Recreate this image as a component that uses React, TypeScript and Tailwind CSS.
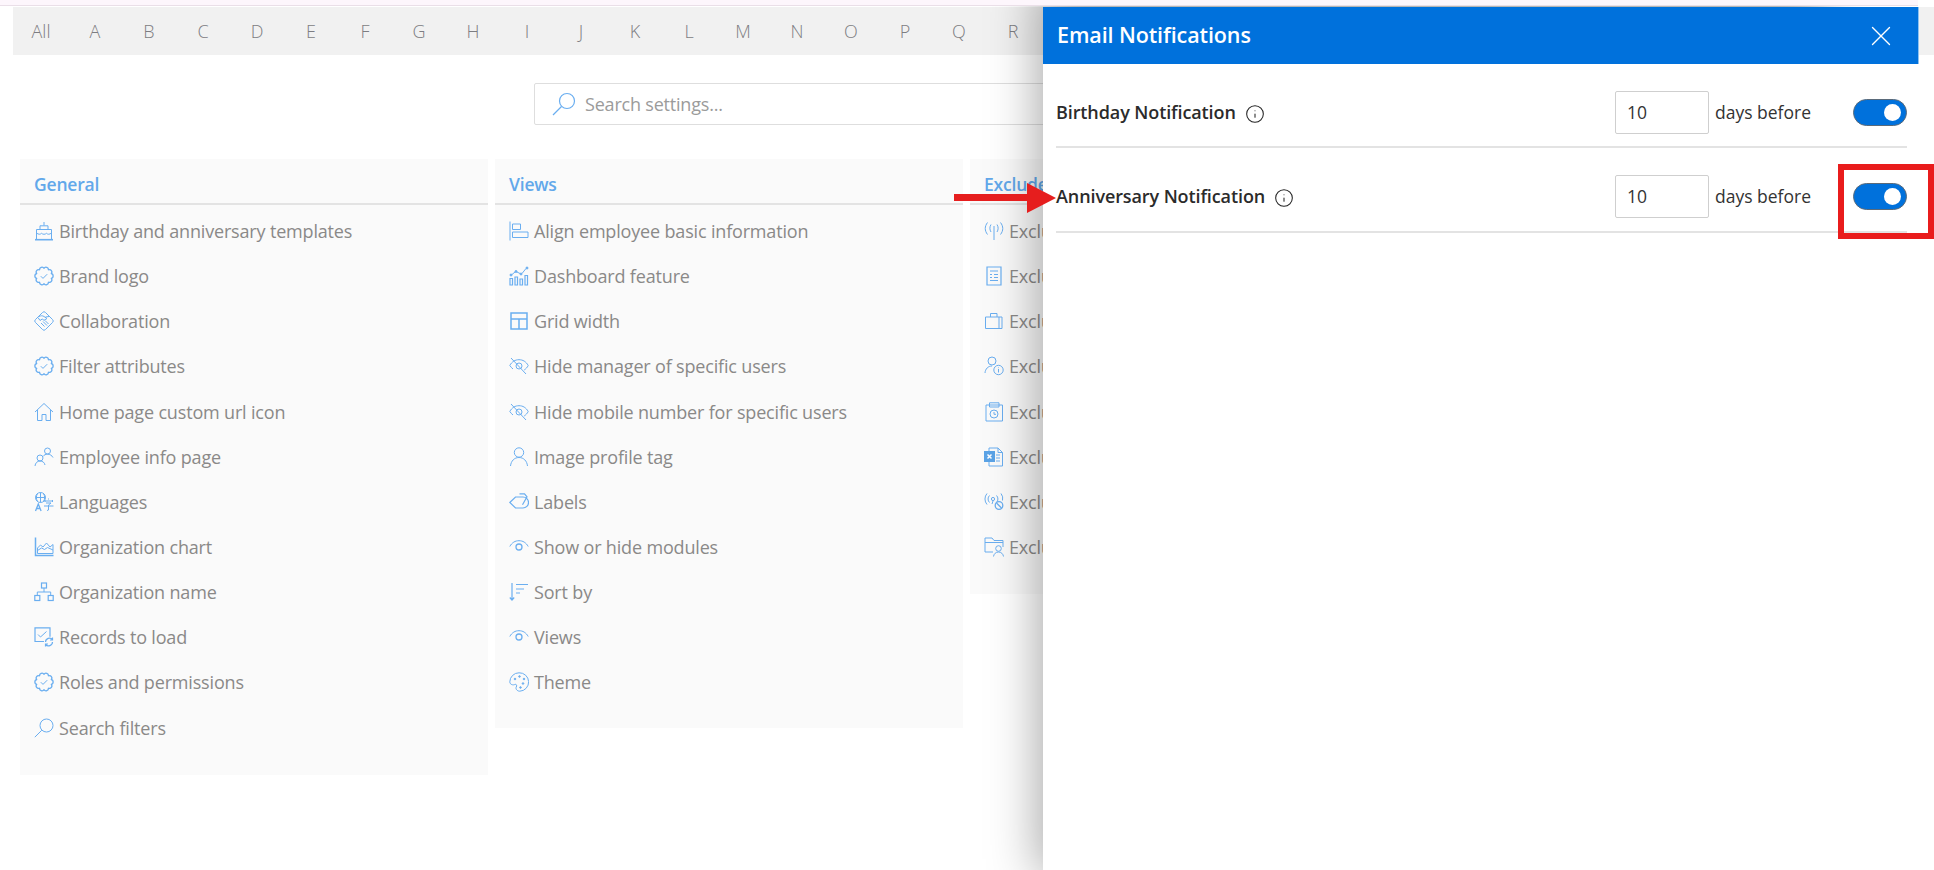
import React from 'react';
import { X, Info } from 'lucide-react';

const stroke = '#6aaef0';

// thin line icons used in the settings lists
function Svg({ children }: { children: React.ReactNode }) {
  return (
    <svg width="20" height="20" viewBox="0 0 20 20" fill="none" stroke={stroke} strokeWidth="1" className="shrink-0">
      {children}
    </svg>
  );
}

// scalloped outline of the badge icon
const scallops = Array.from({ length: 10 }, (_, i) => {
  const a = ((i + 1) / 10) * Math.PI * 2 - Math.PI / 2;
  return `A2.3 2.3 0 0 1 ${(10 + 7.4 * Math.cos(a)).toFixed(2)} ${(10 + 7.4 * Math.sin(a)).toFixed(2)}`;
}).join(' ');

const BadgeIcon = () => (
  <Svg>
    <path d={`M10 2.6 ${scallops}z`} strokeWidth="1.300" strokeLinejoin="bevel" />
    <path d="M6.800 10.200l2.200 2.200 4.200-4.200" />
  </Svg>
);
const EyeIcon = () => (
  <Svg>
    <path d="M.8 9.500C3 5.500 6.200 3.700 10 3.700s7 1.800 9.200 5.800" />
    <circle cx="10" cy="10" r="3" strokeWidth="1.300" />
  </Svg>
);
const EyeOffIcon = () => (
  <Svg>
    <path d="M.8 9.500C3 5.500 6.200 3.700 10 3.700s7 1.800 9.200 5.800c-1 2-2.500 3.500-4 4.500M4 13c-1.300-1-2.300-2.200-3.200-3.500" />
    <circle cx="10" cy="10" r="3" />
    <path d="M2 2l15 16" />
  </Svg>
);
const BroadcastBanIcon = () => (
  <Svg>
    <circle cx="9" cy="7" r="1.600" />
    <path d="M5.500 3.500a5 5 0 0 0 0 7M12.500 3.500a5 5 0 0 1 0 7M3 1.500a8.500 8.500 0 0 0 0 11M17 1.500a8 8 0 0 1 1.500 7" />
    <path d="M9 9l-1 3" />
    <circle cx="15" cy="13.500" r="3.800" strokeWidth="1.300" />
    <path d="M12.500 11l5 5" strokeWidth="1.300" />
  </Svg>
);

const icons: Record<string, React.ReactNode> = {
  cake: (
    <Svg>
      <path d="M10 1v3.500M6 8V4.800h8V8M2.500 18.500V8.500h15v10" />
      <path d="M2.500 12c2 1.600 3.700 1.600 5 .3 1.500 1.300 3.500 1.300 5 0 1.300 1.300 3 1.300 5-.3" />
      <path d="M1 18.700h18" strokeWidth="1.600" />
    </Svg>
  ),
  badge: <BadgeIcon />,
  handshake: (
    <Svg>
      <path d="M8.500 1.500a2 2 0 0 1 3 0l7 7a2 2 0 0 1 0 3l-7 7a2 2 0 0 1-3 0l-7-7a2 2 0 0 1 0-3z" />
      <path d="M5 5.500c2-1 3.500-1 5 0l3 2-3 1.800-1.800-1.300-2.200 1.500L4 6.500M15 5.500l-3.500 .5M7 12l3.500 3.500M9 10.500l4 4M11 9.500l3.500 3.500" />
    </Svg>
  ),
  home: (
    <Svg>
      <path d="M1 10l9-8.500L19 10M3.500 8v10.500H8v-6h4v6h4.500V8" />
    </Svg>
  ),
  people: (
    <Svg>
      <circle cx="13.500" cy="4" r="3" />
      <path d="M9 9.500c1-1.500 2.500-2.300 4.500-2.300 2.500 0 4.500 1.300 5.500 3.300" />
      <circle cx="6" cy="11" r="3" />
      <path d="M1 19c.3-3 2.300-5 5-5s4.500 1.500 5 4" />
    </Svg>
  ),
  languages: (
    <Svg>
      <circle cx="6.500" cy="5.500" r="5" />
      <path d="M1.500 5.500h10M6.500 .5v10M3.500 1.500c-1.500 2.500-1.500 5.500 0 8M9.500 1.500c1.500 2.500 1.500 5.500 0 8" />
      <path d="M1.500 19l2.800-7 2.800 7M2.500 16.500h3.600" strokeWidth="1.300" />
      <path d="M14.500 6.500v1M10.500 9h8.500M11 8v2M18.500 8v2M12 11h5l-2.500 2v5l-1.500 .5M10 14h9.500" />
    </Svg>
  ),
  areachart: (
    <Svg>
      <path d="M1.500 .5v18h18" strokeWidth="1.500" />
      <path d="M3.500 16.500h15.500v-9l-3 2.500-3.500-4-3.500 4-2.500-2-3 3z" />
      <path d="M3.500 13.500l4-2.500 3 1.500 3-2 5.500 2.500" />
    </Svg>
  ),
  network: (
    <Svg>
      <rect x="7.500" y="1" width="5" height="5" strokeWidth="1.200" />
      <rect x=".8" y="13.500" width="5" height="5" strokeWidth="1.200" />
      <rect x="14.200" y="13.500" width="5" height="5" strokeWidth="1.200" />
      <path d="M10 6v4M3.300 13.500V10h13.400v3.500" />
    </Svg>
  ),
  records: (
    <Svg>
      <path d="M10 14.500H1V.8h15v9" strokeWidth="1.200" />
      <path d="M4 7.500l2.500 2.500 6-5.500" />
      <path d="M11.500 15a4 4 0 0 1 7-2.500M18.500 15a4 4 0 0 1-7 2.500M18.500 10.500v2.500h-2.500M11.500 19.500V17H14" strokeWidth="1.200" />
    </Svg>
  ),
  search: (
    <Svg>
      <circle cx="12.500" cy="7.500" r="6.500" />
      <path d="M7.800 12.200L.8 19.200" />
    </Svg>
  ),
  align: (
    <Svg>
      <path d="M1 .5v19M3.500 3h8v5.500h-8zM3.500 11h15.500v5.500H3.500z" />
    </Svg>
  ),
  dashboard: (
    <Svg>
      <path d="M1 12.500h2.500v6.500H1zM6 11h2.500v8H6zM11 13h2.500v6H11zM16 9.500h2.500V19H16z" strokeWidth="1.200" />
      <circle cx="2" cy="9" r="1" fill={stroke} />
      <circle cx="7" cy="5.500" r="1" fill={stroke} />
      <circle cx="12" cy="8" r="1" fill={stroke} />
      <circle cx="18" cy="2" r="1" fill={stroke} />
      <path d="M3 8.500l3-2.500M8 6l3 1.500M13 7.500l4-5" />
    </Svg>
  ),
  grid: (
    <Svg>
      <path d="M2 2h16v16H2zM2 8h16M10 8v10" strokeWidth="1.500" />
    </Svg>
  ),
  eyeoff: <EyeOffIcon />,
  person: (
    <Svg>
      <circle cx="10" cy="5.500" r="4.700" />
      <path d="M1.500 19c.5-5 3.800-8.500 8.500-8.500s8 3.500 8.500 8.500" />
    </Svg>
  ),
  tag: (
    <Svg>
      <path d="M.8 10.500L6.500 5H14a5.500 5.500 0 0 1 0 11H6.500z" strokeWidth="1.200" />
      <path d="M10.500 1.800h5l2.500 3-4.500 8" strokeWidth="1.200" />
    </Svg>
  ),
  eye: <EyeIcon />,
  sort: (
    <Svg>
      <path d="M3 1v17M.8 15.500L3 18l2.200-2.500M7 2.500h12M7 7h8M7 11h4" strokeWidth="1.200" />
    </Svg>
  ),
  palette: (
    <Svg>
      <path d="M10 .8a9.200 9.200 0 0 0-9.200 9c0 3 3.500 3.500 5 2.700 1.500-.8 2.500 1 1.500 2.500s.5 4.200 3.500 4.200a9.200 9.200 0 0 0-.8-18.400z" />
      <circle cx="6" cy="7" r=".8" fill={stroke} />
      <circle cx="10.500" cy="4.500" r=".8" fill={stroke} />
      <circle cx="15" cy="7" r=".8" fill={stroke} />
      <circle cx="14" cy="11.500" r=".8" fill={stroke} />
      <circle cx="11.500" cy="15.500" r=".8" fill={stroke} />
    </Svg>
  ),
  antenna: (
    <Svg>
      <path d="M10 5v14M7 3.500c-1.500 2.500-1.500 5 0 7.500M13 3.500c1.500 2.500 1.500 5 0 7.500M3.500 1.500c-3 4-3 8 0 12M16.500 1.500c3 4 3 8 0 12" />
    </Svg>
  ),
  list: (
    <Svg>
      <path d="M3 1h14v18H3z" strokeWidth="1.200" />
      <path d="M6 5h8M6 8.500h2M10 8.500h4M6 11.500h2M10 11.500h4M6 14.500h8" />
    </Svg>
  ),
  briefcase: (
    <Svg>
      <path d="M1.500 6h16.500v11.500H1.500zM6.500 6V2.500h6.500V6M15 6v11.500" />
    </Svg>
  ),
  personinfo: (
    <Svg>
      <circle cx="8" cy="5" r="4" />
      <path d="M1 17c.3-4 3-7 7-7" />
      <circle cx="14.500" cy="14" r="4.700" />
      <path d="M14.500 13v3.500M14.500 11.500v.6" />
    </Svg>
  ),
  saveclock: (
    <Svg>
      <path d="M2 3h16.500v16H2zM5.500 3V.8h9.500V5H5.500z" />
      <circle cx="10" cy="12" r="4" />
      <path d="M10 10v2.300h2" />
    </Svg>
  ),
  excel: (
    <Svg>
      <path d="M5 4V1h9l4.500 4.500V19H5v-4" />
      <path d="M14 1v4.500h4.500M12 8h4M12 11h4M12 14h4" />
      <rect x=".5" y="4.500" width="10" height="10" fill="#5ba3e6" stroke="#5ba3e6" />
      <path d="M3.500 7.500l4 4M7.500 7.500l-4 4" stroke="#fff" strokeWidth="1.500" />
    </Svg>
  ),
  broadcastban: <BroadcastBanIcon />,
  folderuser: (
    <Svg>
      <path d="M9 15H1V1h7l2 2.500h9v6.500M1 5.500h18" />
      <circle cx="14.500" cy="11.500" r="2.800" />
      <path d="M9.500 19.500c.3-2.500 2.300-4.500 5-4.500s4.700 2 5 4.500" />
    </Svg>
  ),
};

const general = [
  ['cake', 'Birthday and anniversary templates'],
  ['badge', 'Brand logo'],
  ['handshake', 'Collaboration'],
  ['badge', 'Filter attributes'],
  ['home', 'Home page custom url icon'],
  ['people', 'Employee info page'],
  ['languages', 'Languages'],
  ['areachart', 'Organization chart'],
  ['network', 'Organization name'],
  ['records', 'Records to load'],
  ['badge', 'Roles and permissions'],
  ['search', 'Search filters'],
];

const views = [
  ['align', 'Align employee basic information'],
  ['dashboard', 'Dashboard feature'],
  ['grid', 'Grid width'],
  ['eyeoff', 'Hide manager of specific users'],
  ['eyeoff', 'Hide mobile number for specific users'],
  ['person', 'Image profile tag'],
  ['tag', 'Labels'],
  ['eye', 'Show or hide modules'],
  ['sort', 'Sort by'],
  ['eye', 'Views'],
  ['palette', 'Theme'],
];

const exclude = [
  ['antenna', 'Exclude'],
  ['list', 'Exclude'],
  ['briefcase', 'Exclude'],
  ['personinfo', 'Exclude'],
  ['saveclock', 'Exclude'],
  ['excel', 'Exclude'],
  ['broadcastban', 'Exclude'],
  ['folderuser', 'Exclude'],
];

const letters = ['All', ...'ABCDEFGHIJKLMNOPQR'.split('')];

function Column({ title, items, className }: { title: string; items: string[][]; className: string }) {
  return (
    <div className={`bg-[#fafafa] ${className}`}>
      <div className="h-[46px] border-b-2 border-[#e3e3e3] pl-[14px] pt-[13px] text-[17.5px] font-semibold leading-[24px] tracking-[-0.2px] text-[#62a8ea]">
        {title}
      </div>
      <div className="flex flex-col pt-[3.5px]">
        {items.map(([icon, label], i) => (
          <div key={i} className="flex h-[45.15px] items-center gap-[5px] pl-[14px]">
            {icons[icon]}
            <span className="text-[18px] leading-[24px] tracking-[-0.17px] text-[#8a8988]">{label}</span>
          </div>
        ))}
      </div>
    </div>
  );
}

function NotificationRow({ label, className }: { label: string; className: string }) {
  return (
    <div className={`flex items-center justify-between border-b-2 border-[#e3e3e3] pt-[27px] ${className}`}>
      <div className="flex items-center gap-[9px]">
        <span className="text-[18px] font-semibold tracking-[-0.1px] text-[#2b2b2b]">{label}</span>
        <Info size={20} strokeWidth={1.25} className="mt-[2px] text-[#222]" />
      </div>
      <div className="flex items-center">
        <div className="flex h-[43px] w-[94px] items-center rounded-[2px] border border-[#cfcfcf] pl-[11px] text-[17.5px] text-[#333]">10</div>
        <span className="ml-[6px] w-[138px] text-[17.5px] text-[#333]">days before</span>
        <div className="flex h-[27px] w-[54px] items-center justify-end rounded-full border border-[#5a6a7a] bg-[#0071dc] pr-[5px]">
          <div className="h-[17px] w-[17px] rounded-full bg-white" />
        </div>
      </div>
    </div>
  );
}

export default function App() {
  return (
    <div className="h-[870px] w-[1934px] overflow-hidden bg-white font-['Open_Sans','Noto_Sans',sans-serif]">
      <div className="h-[6px] w-[1918px] border-b border-[#eadfe8] bg-[#fdf6fc]" />
      <div className="relative h-[864px] overflow-hidden">
        <div className="ml-[13px] mt-[1px] flex h-[48px] items-center overflow-hidden bg-[#f1f1f1] pl-px">
          {letters.map((l) => (
            <span key={l} className="w-[54px] shrink-0 text-center text-[18px] font-light text-[#7d7d82]">{l}</span>
          ))}
        </div>
        <div className="ml-[534px] mt-[28px] flex h-[42px] w-[900px] items-center gap-[8px] rounded-[2px] border border-[#dedede] pl-[16px]">
          <svg width="26" height="24" viewBox="0 0 26 24" fill="none" stroke={stroke} strokeWidth="1.200">
            <circle cx="16" cy="9" r="7.500" />
            <path d="M10.500 14.500L2 23" />
          </svg>
          <span className="text-[18px] tracking-[-0.2px] text-[#9b9b9b]">Search settings...</span>
        </div>
        <div className="ml-[20px] mt-[34px] flex items-start gap-[7px]">
          <Column title="General" items={general} className="h-[616px] w-[468px]" />
          <Column title="Views" items={views} className="h-[569px] w-[468px]" />
          <Column title="Exclude" items={exclude} className="h-[435px] w-[470px]" />
        </div>

        <div className="absolute bottom-[-120px] left-[1043px] top-[1px] w-[876px] bg-white shadow-[-50px_-70px_46px_-45px_rgba(0,0,0,0.34)]">
          <div className="flex h-[57px] items-center justify-between border-r border-[#8fc2f0] bg-[#0071dc] pl-[14px] pr-[20px]">
            <span className="text-[21.5px] font-semibold tracking-[-0.1px] text-white">Email Notifications</span>
            <X size={34} strokeWidth={0.95} className="text-white" />
          </div>
          <div className="ml-[13px] mr-[12px]">
            <NotificationRow label="Birthday Notification" className="pb-[12px]" />
            <NotificationRow label="Anniversary Notification" className="pb-[13px]" />
          </div>
        </div>

        {/* annotations drawn over the screenshot */}
        <svg className="absolute left-[954px] top-[177px]" width="102" height="30" viewBox="0 0 102 30" fill="#e61e1e">
          <path d="M0 11h73V0l29 15-29 15V18H0z" />
        </svg>
        <div className="absolute left-[1838px] top-[158px] h-[75px] w-[96px] border-[6px] border-[#e91c1c]" />
      </div>
    </div>
  );
}
